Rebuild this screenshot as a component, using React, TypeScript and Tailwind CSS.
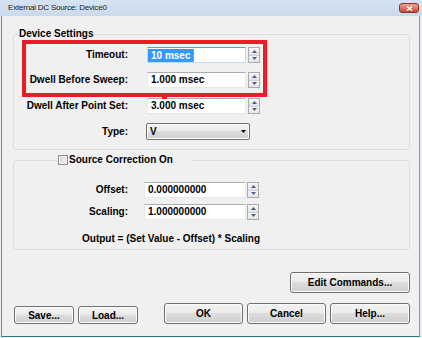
import React from 'react';

// Win7-ish button face used by buttons and the combo box
const face =
  'bg-[linear-gradient(#f3f3f3,#ebebeb_45%,#dddddd_50%,#cfcfcf)] shadow-[inset_0_0_0_1px_#fbfbfb]';

function Spinner({ className = '' }: { className?: string }) {
  return (
    <div className={`flex h-[16px] w-[12px] flex-col border border-[#acacac] ${className}`}>
      <div className="flex flex-1 items-center justify-center border-b border-[#cfcfcf] bg-linear-to-b from-[#f7f7f7] to-[#e3e3e3]">
        <svg width="5" height="3" viewBox="0 0 5 3">
          <path d="M2.5 0 5 3H0Z" fill="#4a5f87" />
        </svg>
      </div>
      <div className="flex flex-1 items-center justify-center bg-linear-to-b from-[#f7f7f7] to-[#e3e3e3]">
        <svg width="5" height="3" viewBox="0 0 5 3">
          <path d="M0 0h5L2.5 3Z" fill="#4a5f87" />
        </svg>
      </div>
    </div>
  );
}

function Label({ children }: { children: React.ReactNode }) {
  return <div className="w-[114px] shrink-0 text-right leading-[16px]">{children}</div>;
}

function Field({ value, w }: { value: string; w: string }) {
  return (
    <div
      className={`flex h-[16px] ${w} items-center border border-[#e3e9ef] border-t-[#abadb3] bg-white pl-[3px] leading-[14px]`}
    >
      {value}
    </div>
  );
}

function Button({ children, className = '' }: { children: React.ReactNode; className?: string }) {
  return (
    <button
      className={`flex items-center justify-center rounded-[3px] border border-[#707070] ${face} ${className}`}
    >
      {children}
    </button>
  );
}

export default function App() {
  return (
    <div className="relative flex h-[338px] w-[422px] flex-col overflow-hidden bg-[#e9f0f8] font-['Liberation_Sans',Arial,sans-serif] text-[10px] text-black">
      {/* Title bar */}
      <div className="flex h-[16px] shrink-0 items-center justify-between bg-linear-to-b from-[#d6e3f2] to-[#c9daec] pl-[8px] pr-[3px]">
        <span className="text-[8px] tracking-[-0.2px] text-[#1b1b1b]">External DC Source: Device0</span>
        <div className="flex h-[10px] w-[20px] items-center justify-center rounded-[3px] border border-[#8f3124] bg-linear-to-b from-[#e9a595] to-[#c44a37]">
          <svg width="7" height="5" viewBox="0 0 7 5">
            <path d="M1 0.5 6 4.5M6 0.5 1 4.5" stroke="#fff" strokeWidth="1.4" />
          </svg>
        </div>
      </div>

      {/* Client area */}
      <div className="mb-[1px] ml-[1px] mr-[2px] flex flex-1 flex-col border-b border-l border-r border-b-[#1e7b8c] border-l-[#7b8593] border-r-[#5d9fe0] bg-[#f0f0f0] pl-[11px] pr-[9px] font-bold">
        {/* Device Settings */}
        <fieldset className="mt-[12px] rounded-[3px] border border-[#d5dfe5] pb-[9px]">
          <legend className="ml-[4px] px-[1px] leading-[12px]">Device Settings</legend>

          <div className="mt-[7px] flex h-[16px] items-center">
            <Label>Timeout:</Label>
            <div className="ml-[19px] flex h-[16px] w-[99px] items-center border border-[#c5daed] border-t-[#569de5] bg-white">
              <span className="bg-[#3399ff] px-[3px] leading-[13px] text-white">10 msec</span>
              <span className="h-[13px] w-[1px] bg-[#e8891c]" />
            </div>
            <Spinner className="ml-[2px]" />
          </div>

          <div className="mt-[9px] flex h-[16px] items-center">
            <Label>Dwell Before Sweep:</Label>
            <div className="ml-[19px]">
              <Field value="1.000 msec" w="w-[99px]" />
            </div>
            <Spinner className="ml-[2px]" />
          </div>

          <div className="mt-[10px] flex h-[16px] items-center">
            <Label>Dwell After Point Set:</Label>
            <div className="ml-[19px]">
              <Field value="3.000 msec" w="w-[99px]" />
            </div>
            <Spinner className="ml-[2px]" />
          </div>

          <div className="mt-[9px] flex h-[17px] items-center">
            <Label>Type:</Label>
            <div
              className={`ml-[18px] flex h-[17px] w-[104px] items-center justify-between rounded-[2px] border border-[#707070] pl-[3px] pr-[3px] ${face}`}
            >
              <span>V</span>
              <svg width="5" height="3" viewBox="0 0 5 3">
                <path d="M0 0h5L2.5 3Z" fill="#000" />
              </svg>
            </div>
          </div>
        </fieldset>

        {/* Source correction */}
        <fieldset className="mt-[3px] rounded-[3px] border border-[#d5dfe5] pb-[4px]">
          <legend className="ml-[43px] flex h-[14px] items-center gap-[1px] pl-[1px] pr-[19px] leading-[12px]">
            <span className="h-[10px] w-[10px] border border-[#8e8f8f] bg-linear-to-br from-[#d4d4d4] to-[#f4f4f4] shadow-[inset_0_0_0_1px_#ededed]" />
            <span>Source Correction On</span>
          </legend>

          <div className="mt-[15px] flex h-[16px] items-center">
            <Label>Offset:</Label>
            <div className="ml-[16px]">
              <Field value="0.000000000" w="w-[102px]" />
            </div>
            <Spinner className="ml-[1px]" />
          </div>

          <div className="mt-[6px] flex h-[16px] items-center">
            <Label>Scaling:</Label>
            <div className="ml-[16px]">
              <Field value="1.000000000" w="w-[102px]" />
            </div>
            <Spinner className="ml-[1px]" />
          </div>

          <div className="ml-[68px] mt-[13px] leading-[12px]">Output = (Set Value - Offset) * Scaling</div>
        </fieldset>

        {/* Buttons */}
        <div className="mt-[22px] flex justify-end">
          <Button className="h-[21px] w-[120px]">Edit Commands...</Button>
        </div>
        <div className="mt-[10px] flex items-end">
          <Button className="ml-[1px] h-[18px] w-[60px]">Save...</Button>
          <Button className="ml-[4px] h-[18px] w-[60px]">Load...</Button>
          <Button className="ml-auto h-[21px] w-[79px] border-[#3c86c4] shadow-[inset_0_0_0_1px_#bfe3f7]">OK</Button>
          <Button className="ml-[4px] h-[21px] w-[79px]">Cancel</Button>
          <Button className="ml-[4px] h-[21px] w-[80px]">Help...</Button>
        </div>
      </div>

      {/* Red annotation box */}
      <div className="absolute left-[22px] top-[40px] h-[57px] w-[245px] border-4 border-[#ed1c24]" />
      <div className="absolute left-[162px] top-[96px] h-[3px] w-[5px] bg-[#ed1c24]" />
    </div>
  );
}
